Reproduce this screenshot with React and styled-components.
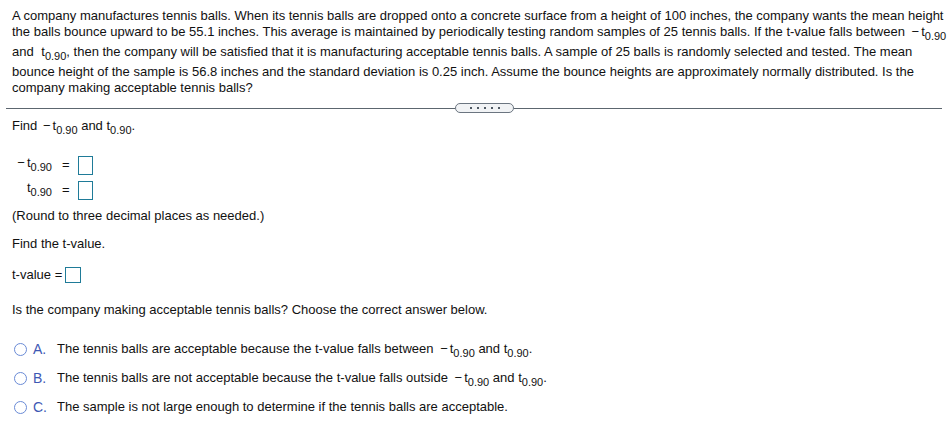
import React from 'react';
import styled, { createGlobalStyle } from 'styled-components';

const GlobalStyle = createGlobalStyle`
  html, body {
    margin: 0;
    padding: 0;
    background: #fff;
  }
  body {
    font-family: "Liberation Sans", Arial, sans-serif;
    font-size: 13px;
    line-height: 16px;
    color: #111;
  }
`;

const Page = styled.div`
  width: 948px;
  padding-top: 8px;
  box-sizing: border-box;
`;

const Question = styled.p`
  margin: 0 0 7px;
  padding: 0 1px 0 12px;
`;

const T = styled.span`
  margin-left: ${p => p.$gap || 0}px;
`;

const Sub = styled.span`
  font-size: 11px;
  line-height: 16px;
  vertical-align: -4px;
`;

const Neg = styled.span`
  margin-left: ${p => p.$gap || 0}px;
  margin-right: 2px;
`;

const Divider = styled.div`
  display: flex;
  align-items: center;
  margin: 0 6px;
  height: 10px;
`;

const Rule = styled.div`
  flex: ${p => (p.$w ? `0 0 ${p.$w}px` : '1')};
  height: 1px;
  background: #5c666f;
`;

const Pill = styled.div`
  width: 57px;
  height: 8px;
  border: 1px solid #6b7580;
  border-radius: 5px;
  background: #f1f3f5;
  display: flex;
  align-items: center;
  justify-content: center;
  gap: 5px;
`;

const Dot = styled.span`
  width: 2px;
  height: 2px;
  background: #4f5963;
`;

const Section = styled.div`
  padding-left: 12px;
  margin-top: ${p => p.$top}px;
`;

const Text = styled.div`
  margin-top: ${p => p.$top || 0}px;
`;

const AnswerGrid = styled.div`
  display: grid;
  grid-template-columns: 40px auto auto;
  justify-content: start;
  align-items: center;
  row-gap: 5px;
  margin-top: 17px;
`;

const Label = styled.div`
  text-align: right;
  white-space: nowrap;
`;

const Eq = styled.div`
  margin: 0 8px 0 10px;
`;

const Box = styled.div`
  width: ${p => p.$w}px;
  height: ${p => p.$h}px;
  box-sizing: border-box;
  border: 1px solid #1f7b98;
  background: #fff;
`;

const InlineRow = styled.div`
  display: flex;
  align-items: center;
  margin-top: ${p => p.$top}px;
  gap: 3px;
`;

const Options = styled.div`
  display: flex;
  flex-direction: column;
  gap: 9px;
  margin-top: 23px;
`;

const Option = styled.div`
  display: flex;
  align-items: flex-start;
`;

const Radio = styled.span`
  width: 13px;
  height: 13px;
  box-sizing: border-box;
  border: 1.5px solid #6a8bd6;
  border-radius: 50%;
  margin: 2px 6px 0 2px;
  flex-shrink: 0;
`;

const Letter = styled.span`
  width: 24px;
  color: #3e58b4;
  font-size: 14px;
`;

const tsub = (gap) => (
  <T $gap={gap}>t<Sub>0.90</Sub></T>
);

const options = [
  {
    letter: 'A.',
    text: (
      <>The tennis balls are acceptable because the t-value falls between <Neg $gap={3}>−</Neg>{tsub()} and {tsub()}.</>
    ),
  },
  {
    letter: 'B.',
    text: (
      <>The tennis balls are not acceptable because the t-value falls outside <Neg $gap={3}>−</Neg>{tsub()} and {tsub()}.</>
    ),
  },
  {
    letter: 'C.',
    text: <>The sample is not large enough to determine if the tennis balls are acceptable.</>,
  },
];

export default function App() {
  return (
    <>
      <GlobalStyle />
      <Page>
        <Question>
          A company manufactures tennis balls. When its tennis balls are dropped onto a concrete surface from a
          height of 100 inches, the company wants the mean height the balls bounce upward to be 55.1 inches. This
          average is maintained by periodically testing random samples of 25 tennis balls. If the t-value falls
          between <Neg $gap={3}>−</Neg>{tsub()} and {tsub(4)}, then the company will be satisfied that it is manufacturing
          acceptable tennis balls. A sample of 25 balls is randomly selected and tested. The mean bounce height of
          the sample is 56.8 inches and the standard deviation is 0.25 inch. Assume the bounce heights are
          approximately normally distributed. Is the company making acceptable tennis balls?
        </Question>

        <Divider>
          <Rule $w={449} />
          <Pill>
            <Dot /><Dot /><Dot /><Dot /><Dot />
          </Pill>
          <Rule />
        </Divider>

        <Section $top={5}>
          <Text>
            Find <Neg $gap={2}>−</Neg>{tsub()} and {tsub()}.
          </Text>

          <AnswerGrid>
            <Label><Neg>−</Neg>{tsub()}</Label>
            <Eq>=</Eq>
            <Box $w={15} $h={19} />
            <Label>{tsub()}</Label>
            <Eq>=</Eq>
            <Box $w={15} $h={19} />
          </AnswerGrid>

          <Text $top={8}>(Round to three decimal places as needed.)</Text>

          <Text $top={12}>Find the t-value.</Text>

          <InlineRow $top={15}>
            <span>t-value =</span>
            <Box $w={16} $h={16} />
          </InlineRow>

          <Text $top={19}>Is the company making acceptable tennis balls? Choose the correct answer below.</Text>

          <Options>
            {options.map(o => (
              <Option key={o.letter}>
                <Radio />
                <Letter>{o.letter}</Letter>
                <span>{o.text}</span>
              </Option>
            ))}
          </Options>
        </Section>
      </Page>
    </>
  );
}
